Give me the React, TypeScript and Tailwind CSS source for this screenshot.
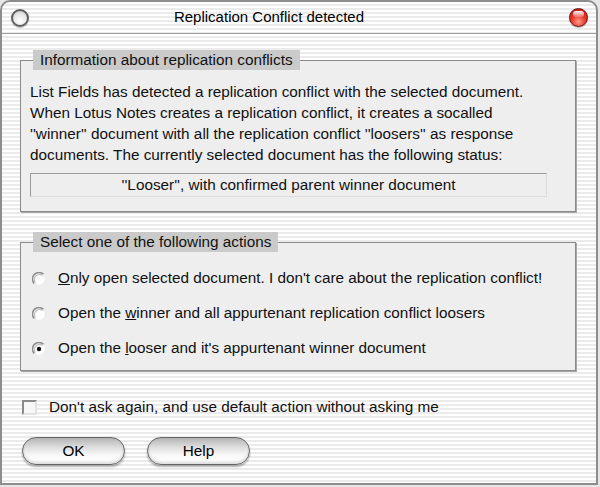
import React from "react";

const stripes =
  "bg-[repeating-linear-gradient(180deg,#ffffff_0px,#ffffff_2px,#ebebeb_2px,#ebebeb_4px)]";

const Radio = ({ checked }: { checked?: boolean }) => (
  <svg width="14" height="14" viewBox="0 0 14 14" className="shrink-0">
    <circle cx="7" cy="7" r="6.5" fill="#fdfdfd" />
    <path d="M2.4 11.6 A6.5 6.5 0 0 1 11.6 2.4" fill="none" stroke="#8c8c8c" strokeWidth="1.5" />
    <path d="M3.5 10.5 A5 5 0 0 1 10.5 3.5" fill="none" stroke="#bdbdbd" strokeWidth="1.2" />
    <path d="M11.6 2.4 A6.5 6.5 0 0 1 2.4 11.6" fill="none" stroke="#ececec" strokeWidth="1.2" />
    {checked && <circle cx="7" cy="7" r="2.2" fill="#111" />}
  </svg>
);

const Option = ({ checked, children }: { checked?: boolean; children: React.ReactNode }) => (
  <div className="flex items-center h-[35px] gap-[12px]">
    <Radio checked={checked} />
    <span>{children}</span>
  </div>
);

const PillButton = ({ label }: { label: string }) => (
  <button
    type="button"
    className="w-[103px] h-[28px] rounded-full border-[1.5px] border-[#666666] bg-[linear-gradient(180deg,#b4b4b4_0%,#dddddd_35%,#f8f8f8_65%,#ffffff_100%)] shadow-[0_2px_2px_rgba(0,0,0,0.3),inset_0_-2px_3px_rgba(0,0,0,0.15)] text-[15.3px] leading-none text-black"
  >
    {label}
  </button>
);

export default function App() {
  return (
    <div className="w-[600px] h-[487px] bg-[#e6e6e6] overflow-hidden font-['Liberation_Sans',Arial,sans-serif] text-[15.3px] text-[#111]">
      <div className={`w-[598px] h-[485px] border-2 border-[#8d8d8d] rounded-t-[10px] ${stripes} flex flex-col`}>
        <div className="h-[32px] border-b border-[#9c9c9c] flex items-center pl-[9px] pr-[8px]">
          <div className="w-[18px] h-[18px] rounded-full border-2 border-[#5e5e5e] bg-[radial-gradient(circle_at_50%_70%,#ffffff_0%,#e4e4e4_60%,#b8b8b8_100%)] shadow-[0_1px_1px_rgba(0,0,0,0.25)]" />
          <span className="flex-1 text-center pr-[60px] text-[15px] text-black">Replication Conflict detected</span>
          <div className="w-[19px] h-[19px] rounded-full border border-[#6d1010] bg-[radial-gradient(circle_at_50%_75%,#ff9a8a_0%,#e83a2a_45%,#b01010_100%)] shadow-[0_1px_1px_rgba(0,0,0,0.3)] flex justify-center pt-[2px]">
            <div className="w-[11px] h-[6px] rounded-full bg-[linear-gradient(180deg,#ffffff_0%,rgba(255,255,255,0.2)_100%)]" />
          </div>
        </div>

        <fieldset className="ml-[18px] mt-[16px] w-[556px] border border-[#8a8a8a] bg-[#eeeeee] shadow-[1px_1px_0_#a8a8a8] pl-[9px] pb-[14px]">
          <legend className="ml-[3px] h-[20px] leading-[20px] px-[7px] bg-[#cacaca]">
            Information about replication conflicts
          </legend>
          <div className="pt-[11px] leading-[21px]">
            <div>List Fields has detected a replication conflict with the selected document.</div>
            <div>When Lotus Notes creates a replication conflict, it creates a socalled</div>
            <div>''winner'' document with all the replication conflict ''loosers'' as response</div>
            <div>documents. The currently selected document has the following status:</div>
          </div>
          <div className="mt-[8px] w-[517px] h-[24px] border border-t-[#9a9a9a] border-l-[#9a9a9a] border-r-[#dcdcdc] border-b-[#dcdcdc] flex items-center justify-center">
            ''Looser'', with confirmed parent winner document
          </div>
        </fieldset>

        <fieldset className="ml-[18px] mt-[20px] w-[556px] border border-[#8a8a8a] bg-[#eeeeee] shadow-[1px_1px_0_#a8a8a8] pl-[11px] pb-[4px]">
          <legend className="ml-[1px] h-[20px] leading-[20px] px-[7px] bg-[#cacaca]">
            Select one of the following actions
          </legend>
          <div className="pt-[9px]">
            <Option>
              <u>O</u>nly open selected document. I don't care about the replication conflict!
            </Option>
            <Option>
              Open the <u>w</u>inner and all appurtenant replication conflict loosers
            </Option>
            <Option checked>
              Open the <u>l</u>ooser and it's appurtenant winner document
            </Option>
          </div>
        </fieldset>

        <div className="ml-[20px] mt-[26px] h-[20px] flex items-center gap-[12px]">
          <div className="w-[15px] h-[15px] border-2 border-t-[#8a8a8a] border-l-[#8a8a8a] border-r-[#e2e2e2] border-b-[#e2e2e2] bg-[#f7f7f7]" />
          <span>Don't ask again, and use default action without asking me</span>
        </div>

        <div className="ml-[20px] mt-[20px] flex gap-[22px]">
          <PillButton label="OK" />
          <PillButton label="Help" />
        </div>
      </div>
    </div>
  );
}
